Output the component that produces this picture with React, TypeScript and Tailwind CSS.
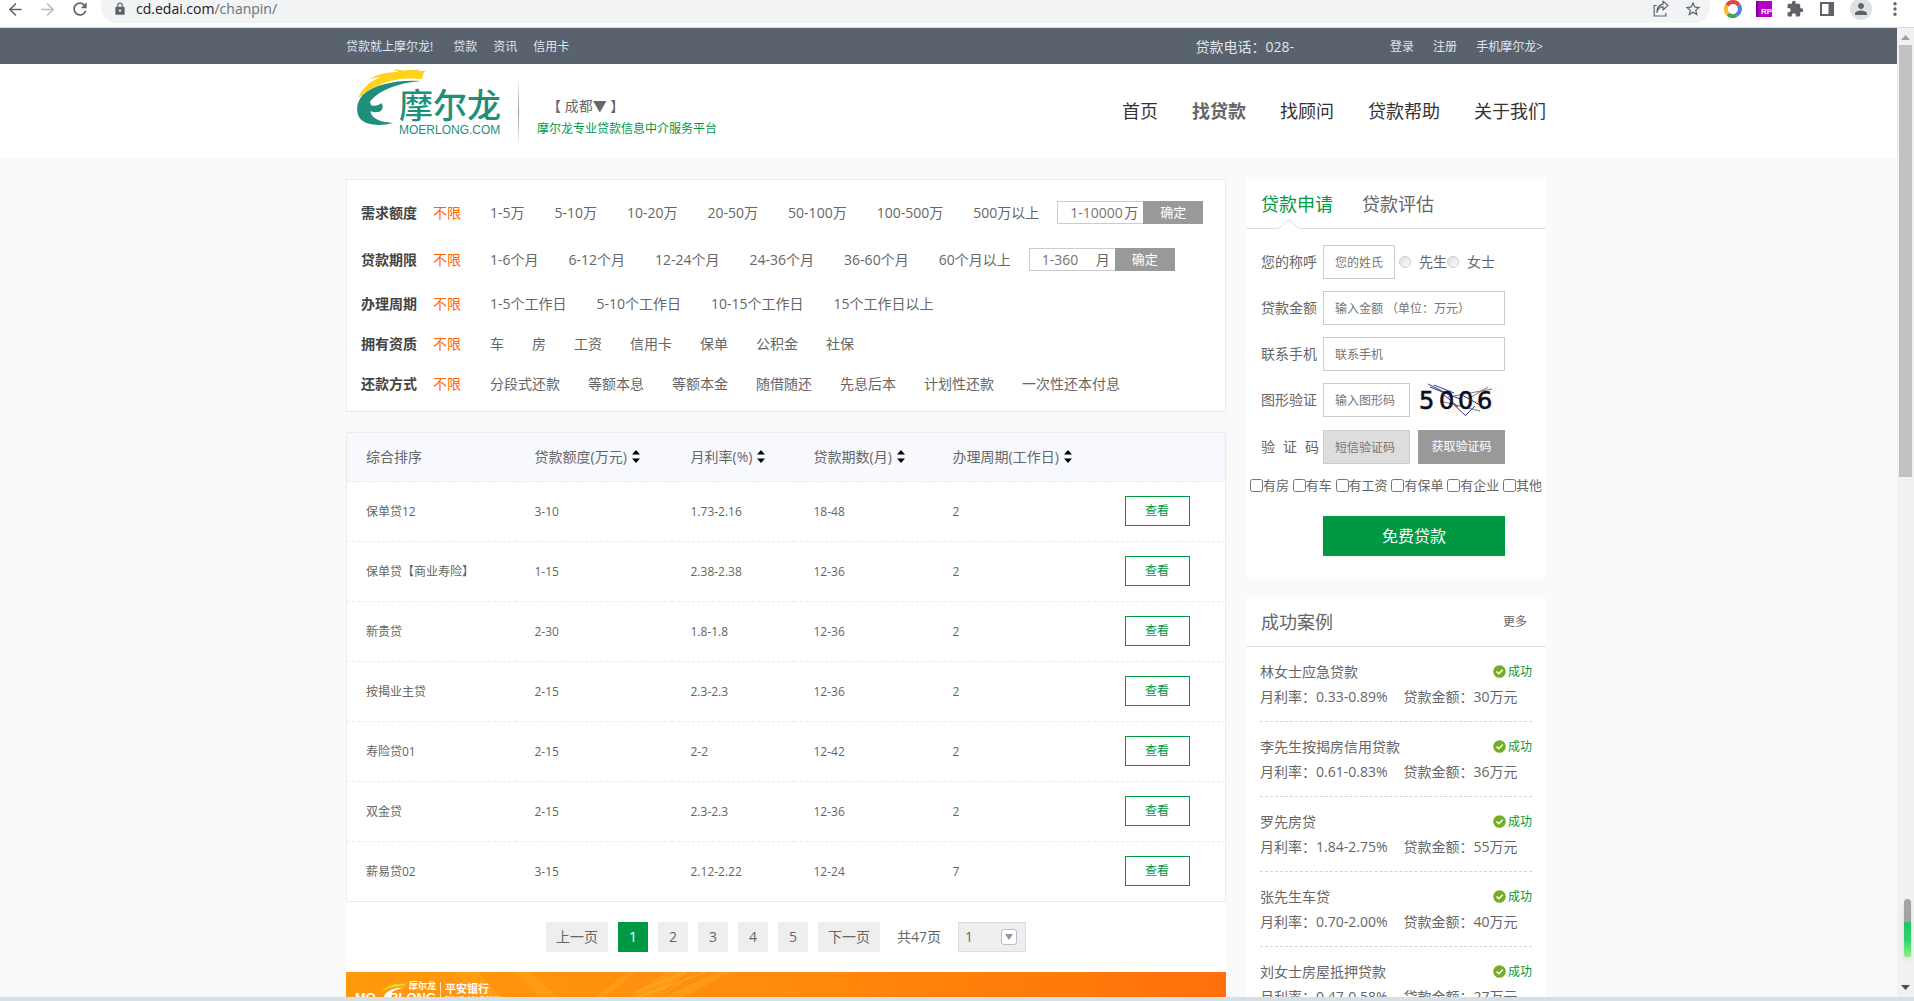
import {
  ArrowLeft,
  ArrowRight,
  EllipsisVertical,
} from 'lucide-react';
import { MdExtension, MdLock, MdPerson, MdRefresh, MdStarBorder } from 'react-icons/md';

const amountOptions = ['1-5万', '5-10万', '10-20万', '20-50万', '50-100万', '100-500万', '500万以上'];
const termOptions = ['1-6个月', '6-12个月', '12-24个月', '24-36个月', '36-60个月', '60个月以上'];
const cycleOptions = ['1-5个工作日', '5-10个工作日', '10-15个工作日', '15个工作日以上'];
const assetOptions = ['车', '房', '工资', '信用卡', '保单', '公积金', '社保'];
const repayOptions = ['分段式还款', '等额本息', '等额本金', '随借随还', '先息后本', '计划性还款', '一次性还本付息'];

const loans = [
  { name: '保单贷12', amount: '3-10', rate: '1.73-2.16', term: '18-48', days: '2' },
  { name: '保单贷【商业寿险】', amount: '1-15', rate: '2.38-2.38', term: '12-36', days: '2' },
  { name: '新贵贷', amount: '2-30', rate: '1.8-1.8', term: '12-36', days: '2' },
  { name: '按揭业主贷', amount: '2-15', rate: '2.3-2.3', term: '12-36', days: '2' },
  { name: '寿险贷01', amount: '2-15', rate: '2-2', term: '12-42', days: '2' },
  { name: '双金贷', amount: '2-15', rate: '2.3-2.3', term: '12-36', days: '2' },
  { name: '薪易贷02', amount: '3-15', rate: '2.12-2.22', term: '12-24', days: '7' },
];

const cases = [
  { title: '林女士应急贷款', rate: '0.33-0.89%', amount: '30万元' },
  { title: '李先生按揭房信用贷款', rate: '0.61-0.83%', amount: '36万元' },
  { title: '罗先房贷', rate: '1.84-2.75%', amount: '55万元' },
  { title: '张先生车贷', rate: '0.70-2.00%', amount: '40万元' },
  { title: '刘女士房屋抵押贷款', rate: '0.47-0.58%', amount: '27万元' },
];

const owned = ['有房', '有车', '有工资', '有保单', '有企业', '其他'];

function BrowserBar() {
  return (
    <div className="flex h-7 shrink-0 items-start border-b border-[#d5d7da] bg-white text-[#5f6368]">
      <div className="flex h-[18px] items-center gap-[13px] pl-[6px] pr-[11px]">
        <button aria-label="后退"><ArrowLeft size={19} strokeWidth={2} /></button>
        <button aria-label="前进" className="text-[#babcbe]"><ArrowRight size={19} strokeWidth={2} /></button>
        <button aria-label="刷新"><MdRefresh size={20} /></button>
      </div>
      <div className="flex h-[23px] flex-1 items-start justify-between rounded-b-[16px] bg-[#f1f3f4] pl-3 pr-2">
        <div className="flex h-[18px] items-center gap-[9px]">
          <MdLock size={14} />
          <span className="text-sm leading-4 text-[#202124]">
            cd.edai.com<span className="text-[#6b6f73]">/chanpin/</span>
          </span>
        </div>
        <div className="flex h-[18px] items-center gap-[14px]">
          <button aria-label="分享">
            <svg width="18" height="18" viewBox="0 0 18 18" fill="none" stroke="currentColor" strokeWidth="1.2">
              <path d="M4.5 5.5H2.2V16h11.6v-3" />
              <path d="M5 12.5c.6-3.6 2.6-5.5 6-5.8V10l5-4.600-5-4.200v3C7 5 4.800 8 5 12.500z" strokeLinejoin="round" />
            </svg>
          </button>
          <button aria-label="收藏"><MdStarBorder size={18} /></button>
        </div>
      </div>
      <div className="flex h-[18px] items-center gap-[14px] pl-[14px] pr-[10px]">
        <svg width="18" height="18" viewBox="0 0 18 18" fill="none" strokeWidth="4">
          <path d="M3 5.500A7 7 0 0 1 15 5.500" stroke="#e0483b" />
          <path d="M15 5.500A7 7 0 0 1 12.500 15" stroke="#4a85e0" />
          <path d="M12.500 15A7 7 0 0 1 4 14" stroke="#43a45a" />
          <path d="M4 14A7 7 0 0 1 3 5.500" stroke="#f2bd2c" />
        </svg>
        <span className="flex h-4 w-4 items-end justify-end border-l-2 border-[#7b008a] bg-[#b400c8] font-['Liberation_Sans'] text-[8px] leading-[10px] font-bold text-white">RP</span>
        <MdExtension size={18} />
        <svg width="18" height="18" viewBox="0 0 18 18" fill="none" stroke="currentColor">
          <rect x="3" y="3" width="12" height="12" strokeWidth="2" />
          <path d="M12.500 3v12" strokeWidth="4" />
        </svg>
        <span className="flex h-[22px] w-[22px] items-center justify-center rounded-full bg-[#dee1e6]">
          <MdPerson size={18} />
        </span>
        <button aria-label="菜单"><EllipsisVertical size={18} strokeWidth={2.500} /></button>
      </div>
    </div>
  );
}

function TopBar() {
  return (
    <div className="h-9 bg-[#5a626e] pr-[5px] text-xs text-[#dfe6f0]">
      <div className="mx-auto flex h-full max-w-[1200px] items-center justify-between pt-px">
        <div className="flex items-center gap-4">
          <span className="mr-1">贷款就上摩尔龙!</span>
          <a href="#loan">贷款</a>
          <a href="#news">资讯</a>
          <a href="#card">信用卡</a>
        </div>
        <div className="flex items-center pr-[3px]">
          <span className="mr-24 text-sm">贷款电话：028-</span>
          <div className="flex gap-[19px]">
            <a href="#login">登录</a>
            <a href="#register">注册</a>
            <a href="#mobile">手机摩尔龙&gt;</a>
          </div>
        </div>
      </div>
    </div>
  );
}

function Logo() {
  return (
    <a href="#home" aria-label="摩尔龙" className="relative block h-[72px] w-[150px] pl-11 pt-[21px] text-[#1f8f7a]">
      <svg className="absolute left-0 top-0" width="78" height="62" viewBox="75 142 234 186">
        <path
          fill="#ffd21c"
          d="M84 236C96 206 120 184 152 173C140 173 128 176 114 181C138 166 166 158 198 157C206 158 202 153 188 148C204 149 218 155 232 151C246 149 254 154 262 148C261 153 268 155 288 153C282 158 278 164 276 179C254 178 232 174 206 179C156 188 120 206 84 236z"
        />
        <path
          fill="#1f8f7a"
          d="M272 184C206 190 150 210 121 244C119 254 124 259 132 258C142 258 150 254 155 250C162 264 156 276 144 277C134 278 126 277 121 275C124 292 140 307 190 310C150 320 110 317 92 299C76 280 78 248 98 226C136 192 204 180 272 184z"
        />
      </svg>
      <span className="block text-[34px] leading-[35px] font-medium">摩尔龙</span>
      <span className="block font-['Liberation_Sans'] text-xs leading-[14px]">MOERLONG.COM</span>
    </a>
  );
}

function Header() {
  return (
    <header className="border-b border-[#f6f6f6] bg-white pr-[5px]">
      <div className="mx-auto flex h-[94px] max-w-[1200px] items-start justify-between">
        <div className="flex pl-[9px] pt-[3px]">
          <Logo />
          <div className="ml-[13px] mt-3 h-[66px] w-px bg-gradient-to-b from-white via-[#999] to-white" />
          <div className="pl-[18px] pt-[29px]">
            <div className="pl-[10px] text-sm leading-5">【 成都▼ 】</div>
            <div className="pt-[3px] text-xs leading-5 text-[#009943]">摩尔龙专业贷款信息中介服务平台</div>
          </div>
        </div>
        <nav className="flex gap-[34px] pt-[33px] text-lg leading-7 text-[#333]">
          <a href="#home">首页</a>
          <a href="#find" className="font-bold text-[#666]">找贷款</a>
          <a href="#adviser">找顾问</a>
          <a href="#help">贷款帮助</a>
          <a href="#about">关于我们</a>
        </nav>
      </div>
    </header>
  );
}

type FilterRowProps = {
  label: string;
  options: string[];
  range?: { placeholder: string; unit: string };
  // ranges of numbers are set a little wider apart than plain words
  numeric?: boolean;
};

function FilterRow({ label, options, range, numeric }: FilterRowProps) {
  return (
    <div className={range ? 'flex h-[47px] items-center' : 'flex h-10 items-center'}>
      <span className="w-[72px] font-bold text-[#444]">{label}</span>
      <a href="#all" className="w-[57px] text-[#ff6600]">不限</a>
      <div className={numeric ? 'flex gap-[30px]' : 'flex gap-7'}>
        {options.map((o) => (
          <a key={o} href="#filter">{o}</a>
        ))}
      </div>
      {range && (
        <form className="ml-[18px] flex h-[23px]" onSubmit={(e) => e.preventDefault()}>
          <label className="flex w-[86px] items-center justify-between border border-r-0 border-[#ccc] pl-3 pr-[6px] leading-[21px]">
            <input
              aria-label={label}
              placeholder={range.placeholder}
              className="w-[54px] outline-none placeholder:text-[#757575]"
            />
            <span>{range.unit}</span>
          </label>
          <button className="w-[60px] bg-[#999] text-[13px] leading-[23px] text-white">确定</button>
        </form>
      )}
    </div>
  );
}

function SortIcon() {
  return (
    <svg className="ml-[5px] inline-block align-[-1px]" width="8" height="13" viewBox="0 0 8 13">
      <path d="M4 0L8 4.500H0zM4 13L0 8.500H8z" fill="#000" />
    </svg>
  );
}

function LoanTable() {
  return (
    <table className="w-full table-fixed border border-[#ebebee] text-left">
      <thead>
        <tr className="h-[49px] border-b border-dashed border-[#eaeaea] bg-[#f8f9ff] text-sm">
          <th className="w-[169px] pl-[19px] font-normal">综合排序</th>
          <th className="w-[156px] pl-[19px] font-normal">贷款额度(万元)<SortIcon /></th>
          <th className="w-[123px] pl-[19px] font-normal">月利率(%)<SortIcon /></th>
          <th className="w-[139px] pl-[19px] font-normal">贷款期数(月)<SortIcon /></th>
          <th className="w-[172px] pl-[19px] font-normal">办理周期(工作日)<SortIcon /></th>
          <th />
        </tr>
      </thead>
      <tbody>
        {loans.map((l) => (
          <tr key={l.name} className="h-[60px] border-b border-dashed border-[#eaeaea] text-xs last:border-solid">
            <td className="pl-[19px]">{l.name}</td>
            <td className="pl-[19px]">{l.amount}</td>
            <td className="pl-[19px]">{l.rate}</td>
            <td className="pl-[19px]">{l.term}</td>
            <td className="pl-[19px]">{l.days}</td>
            <td className="pb-px pl-[19px]">
              <button className="block h-[30px] w-[65px] border border-[#009943] text-[#009943]">查看</button>
            </td>
          </tr>
        ))}
      </tbody>
    </table>
  );
}

function Pagination() {
  return (
    <div className="flex h-[70px] items-center justify-center gap-[10px] text-sm">
      <a href="#prev" className="h-[30px] w-[62px] bg-[#eee] text-center leading-[30px]">上一页</a>
      {[1, 2, 3, 4, 5].map((n) => (
        <a
          key={n}
          href="#page"
          className={
            n === 1
              ? 'h-[30px] w-[30px] bg-[#009943] text-center leading-[30px] text-white'
              : 'h-[30px] w-[30px] bg-[#eee] text-center leading-[30px]'
          }
        >
          {n}
        </a>
      ))}
      <a href="#next" className="h-[30px] w-[62px] bg-[#eee] text-center leading-[30px]">下一页</a>
      <span className="px-[7px]">共47页</span>
      <div className="relative h-[30px] w-[68px]">
        <select aria-label="页码" className="h-full w-full appearance-none border border-[#ddd] bg-[#eee] pl-[6px]">
          <option>1</option>
          <option>2</option>
        </select>
        <span className="pointer-events-none absolute right-[9px] top-[7px] flex h-4 w-4 items-center justify-center rounded-[3px] border border-[#b9c0c8] bg-white">
          <svg width="8" height="6" viewBox="0 0 8 6"><path d="M0 0h8L4 6z" fill="#8d98a6" /></svg>
        </span>
      </div>
    </div>
  );
}

function Banner() {
  return (
    <div className="relative h-20 overflow-hidden bg-gradient-to-r from-[#ff9a0c] via-[#ff8a0c] to-[#ff700a] text-white">
      <svg className="absolute inset-0 h-full w-full" viewBox="0 0 880 80" preserveAspectRatio="none">
        <path d="M110 0h22l70 80h-34zM170 0h14l90 80h-30z" fill="#ffb020" opacity="0.350" />
        <path d="M320 0h22L240 80h-40zM372 0h14L270 60h-30zM282 0h8L190 80h-12z" fill="#ffb52a" opacity="0.300" />
        <path d="M360 0L290 26M350 0L312 26M340 0L290 20" stroke="#ffc53a" strokeWidth="1" opacity="0.500" />
      </svg>
      <div className="relative flex items-start pl-2 pt-[8px]">
        <svg className="absolute left-[32px] top-[9px]" width="30" height="18" viewBox="0 0 36 18">
          <path d="M2 12C8 6 14 4 18 4L12 4C20 1 28 2 34 1L32 4C22 5 12 6 2 12z" fill="#e8d42a" />
          <path d="M33 6C20 6 8 10 7 18h9C13 11 22 8 33 6z" fill="#fff" />
        </svg>
        <div className="w-[86px] text-right">
          <div className="pr-1 text-[9px] leading-[11px] font-bold">摩尔龙</div>
          <div className="flex justify-between pl-px pr-1 font-['Liberation_Sans'] text-[13px] leading-[14px] font-bold">
            <span>MO</span>
            <span>RLONG</span>
          </div>
        </div>
        <div className="mt-[2px] border-l border-white/70 pl-1">
          <div className="text-[11px] leading-[13px] font-bold">平安银行</div>
          <div className="font-['Liberation_Sans'] text-[8px] leading-[8px]">PING AN BANK</div>
        </div>
      </div>
    </div>
  );
}

function Captcha() {
  return (
    <svg className="ml-2 shrink-0 font-['DejaVu_Sans']" role="img" aria-label="图形验证码" width="87" height="34" viewBox="0 0 87 34">
      <rect width="87" height="34" fill="#fefdfc" />
      <path d="M2 8h10v6H2zM60 4h18v5H60zM30 22h12v8H30z" fill="#fdf6ea" />
      <path d="M4 22h8v6H4zM50 20h14v10H50z" fill="#eef9f0" />
      <path d="M10 1l24 12M16 2l20 8M12 4l30 12M34 20l14 13M47 33l10-10" stroke="#3a3790" fill="none" />
      <path d="M30 14l44-8M50 16l20-12M22 18l40 10" stroke="#8d7296" fill="none" />
      <text x="1 21 40 59" y="26" fontSize="24" stroke="#0b0b1c" strokeWidth="0.600" fill="#0b0b1c">5006</text>
      <path d="M24 10l16 14M44 12l18 10" stroke="#30305e" fill="none" />
    </svg>
  );
}

const field =
  'h-[34px] border border-[#ccc] bg-white px-[11px] text-xs outline-none placeholder:text-[#757575]';

function ApplyForm() {
  return (
    <section className="h-[398px] bg-white">
      <div className="relative flex h-[50px] items-center gap-[29px] border-b border-[#ddd] pl-[15px] text-lg">
        <a href="#apply" className="text-[#009943]">贷款申请</a>
        <a href="#assess">贷款评估</a>
        <svg className="absolute -bottom-px left-[31px]" width="24" height="10" viewBox="0 0 24 10">
          <path d="M0 9.500C5 9 8 3 12 1c4 2 7 8 12 8.500V10H0z" fill="#fff" />
          <path d="M0 9.500C5 9 8 3 12 1c4 2 7 8 12 8.500" fill="none" stroke="#ddd" />
        </svg>
      </div>
      <form className="pt-4 text-sm" onSubmit={(e) => e.preventDefault()}>
        <div className="flex flex-col gap-3 pl-[15px]">
          <div className="flex items-center">
            <label htmlFor="name" className="w-[62px]">您的称呼</label>
            <input id="name" placeholder="您的姓氏" className={`${field} w-[72px]`} />
            <label className="ml-1 flex items-center gap-2">
              <input type="radio" name="sex" className="h-3 w-3 appearance-none rounded-full border border-[#ccc] bg-gradient-to-br from-[#ddd] to-white" />
              先生
            </label>
            <label className="flex items-center gap-2">
              <input type="radio" name="sex" className="h-3 w-3 appearance-none rounded-full border border-[#ccc] bg-gradient-to-br from-[#ddd] to-white" />
              女士
            </label>
          </div>
          <div className="flex items-center">
            <label htmlFor="amount" className="w-[62px]">贷款金额</label>
            <input id="amount" placeholder="输入金额 （单位：万元）" className={`${field} w-[182px]`} />
          </div>
          <div className="flex items-center">
            <label htmlFor="phone" className="w-[62px]">联系手机</label>
            <input id="phone" placeholder="联系手机" className={`${field} w-[182px]`} />
          </div>
          <div className="flex items-center">
            <label htmlFor="captcha" className="w-[62px]">图形验证</label>
            <input id="captcha" placeholder="输入图形码" className={`${field} w-[87px]`} />
            <Captcha />
          </div>
          <div className="flex items-center pt-px">
            <label htmlFor="sms" className="flex w-[62px] justify-between pr-1">
              <span>验</span>
              <span>证</span>
              <span>码</span>
            </label>
            <input
              id="sms"
              placeholder="短信验证码"
              className="h-[34px] w-[87px] border border-[#ccc] bg-[#ddd] px-[11px] text-xs outline-none placeholder:text-[#757575]"
            />
            <button className="ml-2 h-[34px] w-[87px] bg-[#999] text-xs text-white">获取验证码</button>
          </div>
        </div>
        <div className="flex justify-between px-1 pt-[11px] text-[13px] leading-5">
          {owned.map((o) => (
            <label key={o} className="flex items-center">
              <input type="checkbox" className="h-[13px] w-[13px]" />
              {o}
            </label>
          ))}
        </div>
        <button className="ml-[77px] mt-[21px] h-10 w-[182px] bg-[#009943] text-base text-white">免费贷款</button>
      </form>
    </section>
  );
}

function Cases() {
  return (
    <section className="bg-white">
      <div className="flex h-[50px] items-center justify-between border-b border-[#ddd] pl-[15px] pr-[19px]">
        <h2 className="text-lg">成功案例</h2>
        <a href="#more" className="text-xs">更多</a>
      </div>
      <ul className="px-[14px] text-sm">
        {cases.map((c) => (
          <li key={c.title} className="h-[75px] border-b border-dashed border-[#d5d5d5] pt-3 leading-[25px]">
            <div className="flex justify-between">
              <span>{c.title}</span>
              <span className="flex items-center gap-[2px] text-xs text-[#009943]">
                <svg width="13" height="13" viewBox="0 0 13 13">
                  <circle cx="6.500" cy="6.500" r="6.300" fill="#76ad27" />
                  <path d="M3.500 6.500l2.300 2.200 3.900-4" fill="none" stroke="#fff" strokeWidth="1.500" />
                </svg>
                成功
              </span>
            </div>
            <div className="flex gap-4">
              <span>月利率：{c.rate}</span>
              <span>贷款金额：{c.amount}</span>
            </div>
          </li>
        ))}
      </ul>
    </section>
  );
}

function Scrollbar() {
  return (
    <div className="relative flex w-[17px] shrink-0 flex-col items-center justify-between bg-[#f1f1f1] py-[5px]">
      <svg width="9" height="9" viewBox="0 0 9 9"><path d="M0 7L4.500 2 9 7z" fill="#9d9d9d" /></svg>
      <div className="mt-[3px] mb-auto h-[45%] w-[13px] bg-[#c1c1c1]" />
      <svg width="9" height="9" viewBox="0 0 9 9"><path d="M0 2h9L4.500 7z" fill="#4d4d4d" /></svg>
      {/* floating monitor gauge */}
      <div className="absolute bottom-10 right-[3px] h-[58px] w-[7px] overflow-hidden rounded-full bg-[#a3a3a3] shadow-md">
        <div className="mt-[23px] h-[35px] bg-gradient-to-b from-[#26c467] via-[#2fd072] to-[#86f57c]" />
      </div>
    </div>
  );
}

export default function App() {
  return (
    <div className="flex h-screen flex-col overflow-hidden bg-[#fafafa] font-['Open_Sans','Noto_Sans_CJK_SC',sans-serif] text-[#666]">
      <BrowserBar />
      <div className="flex min-h-0 flex-1">
        <div className="min-w-0 flex-1 overflow-hidden">
          <TopBar />
          <Header />
          <main className="pr-[5px] pt-5">
            <div className="mx-auto flex max-w-[1200px] items-start gap-5">
              <div className="min-w-0 flex-1">
                <section className="border border-[#ebebeb] bg-white pb-[7px] pl-[14px] pt-[9px] text-sm">
                  <FilterRow label="需求额度" options={amountOptions} range={{ placeholder: '1-10000', unit: '万' }} numeric />
                  <FilterRow label="贷款期限" options={termOptions} range={{ placeholder: '1-360', unit: '月' }} numeric />
                  <div className="pt-px">
                    <FilterRow label="办理周期" options={cycleOptions} numeric />
                    <FilterRow label="拥有资质" options={assetOptions} />
                    <FilterRow label="还款方式" options={repayOptions} />
                  </div>
                </section>
                <section className="mt-5 bg-white">
                  <LoanTable />
                  <Pagination />
                  <Banner />
                </section>
              </div>
              <aside className="flex w-[300px] flex-col gap-5">
                <ApplyForm />
                <Cases />
              </aside>
            </div>
          </main>
        </div>
        <Scrollbar />
      </div>
      <div className="h-1 shrink-0 bg-[#d5e0e8]" />
    </div>
  );
}
